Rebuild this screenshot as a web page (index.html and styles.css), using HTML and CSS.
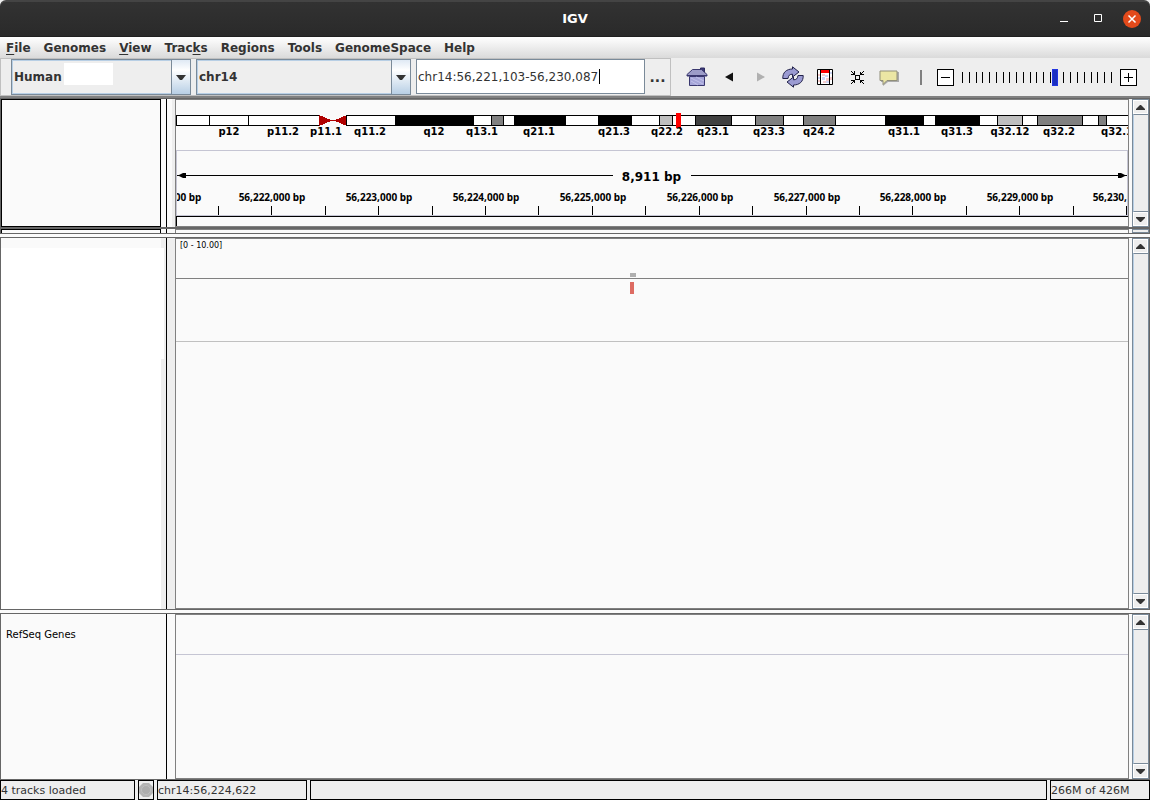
FILE: index.html
```html
<!DOCTYPE html>
<html lang="en">
<head>
<meta charset="utf-8">
<title>IGV</title>
<link rel="stylesheet" href="styles.css">
</head>
<body>
<header class="titlebar">
  <h1 class="title">IGV</h1>
  <div class="window-controls">
    <button class="win-btn" aria-label="Minimize"><svg width="18" height="18"><path d="M5 11.5h8" stroke="#fff"/></svg></button>
    <button class="win-btn" aria-label="Maximize"><svg width="18" height="18"><path d="M5.5 4.500h7v7h-7z" fill="none" stroke="#fff"/></svg></button>
    <button class="win-btn win-close" aria-label="Close"><svg width="18" height="18"><path d="M5.500 5.500l7 7m0-7l-7 7" stroke="#fff" stroke-width="1.500"/></svg></button>
  </div>
</header>
<nav class="menubar">
  <button class="menu"><u>F</u>ile</button>
  <button class="menu">Genomes</button>
  <button class="menu"><u>V</u>iew</button>
  <button class="menu">Trac<u>k</u>s</button>
  <button class="menu">Regions</button>
  <button class="menu">Tools</button>
  <button class="menu">GenomeSpace</button>
  <button class="menu">Help</button>
</nav>
<div class="toolbar">
  <div class="locus-group">
    <div class="combo combo-genome">
      <select class="combo-select" aria-label="Genome"><option>Human</option></select>
      <span class="blank-patch"></span>
      <span class="combo-arrow"><svg width="10" height="5"><path d="M0 0h10L6 5H4z" fill="#333"/></svg></span>
    </div>
    <div class="combo combo-chrom">
      <select class="combo-select" aria-label="Chromosome"><option>chr14</option></select>
      <span class="combo-arrow"><svg width="10" height="5"><path d="M0 0h10L6 5H4z" fill="#333"/></svg></span>
    </div>
    <div class="locus">
      <input class="locus-input" type="text" aria-label="Locus" value="chr14:56,221,103-56,230,087">
      <span class="caret"></span>
    </div>
    <button class="more" aria-label="More">...</button>
  </div>
  <div class="tools">
    <button class="tool" aria-label="Home"><svg width="22" height="20"><path d="M14.500 1h4v6h-4z" fill="#3c3a78" stroke="#2c2a60"/><path d="M6.500 2.500h9l5.500 5v1.500H1V7.500z" fill="#9c9cc8" stroke="#39376e"/><path d="M1 8.500h20" stroke="#39376e"/><path d="M3.500 9.500h15v9h-15z" fill="#a5a5d8" stroke="#39376e"/><path d="M5 11l12 6M5 14l7 4M10 10l8 4" stroke="#c2c2ea"/></svg></button>
    <button class="tool" aria-label="Back"><svg width="10" height="10"><path d="M1 5l8-4.500v9z" fill="#111"/></svg></button>
    <button class="tool" aria-label="Forward"><svg width="10" height="10"><path d="M9 5L1 .5v9z" fill="#b0b0b0"/></svg></button>
    <button class="tool" aria-label="Refresh"><svg width="22" height="22"><g fill="#9b9bd2" stroke="#22224a"><path d="M.8 12.500C.5 6.500 4.500 3 10.500 3V.8L17 6l-6.500 5V8.200C7.500 8.200 6.500 9.500 6 12.500z"/><path d="M21.200 9.500C21.500 15.500 17.500 19 11.500 19v2.200L5 16l6.500-5v2.800c3 0 4-1.300 4.500-4.300z"/></g></svg></button>
    <button class="tool" aria-label="Define a region of interest"><svg width="16" height="16"><path fill="#fff" stroke="#000" d="M.5.5h15v15H.5z"/><path fill="#f6cccc" d="M1 5h2v2H1zM1 11h2v2H1zM13 8h2v3h-2zM5 5h3v2H5zM9 9h3v3H9zM6 12h3v2H6z"/><path fill="#cfd6f4" d="M1 8h2v2H1zM13 3h2v2h-2zM8 6h3v2H8zM5 8h3v3H5zM9 12h3v2H9z"/><path fill="#f00" d="M4 1h8v3H4z"/><path d="M3.500 1v14M12.500 1v14" stroke="#000"/></svg></button>
    <button class="tool" aria-label="Resize tracks to fit"><svg class="crisp" width="13" height="13"><path fill="none" stroke="#000" d="M4.500 4.500h4v4h-4z"/><path d="M0 0h1v1H0zM1 1h1v1H1zM2 2h1v1H2zM3 0h1v4H0V3h3zM12 0h1v1h-1zM11 1h1v1h-1zM10 2h1v1h-1zM9 1h1v2h3v1H9zM0 12h1v1H0zM1 11h1v1H1zM2 10h1v1H2zM0 9h4v3H3v-2H0zM12 12h1v1h-1zM11 11h1v1h-1zM10 10h1v1h-1zM9 9h4v1h-3v2H9z"/></svg></button>
    <button class="tool" aria-label="Popup text behaviour"><svg width="20" height="18"><path d="M2 4h18v10H9l-5 4v-4H2z" fill="#aaa"/><path d="M1 3h17v9.500H8L4 16.500v-4H1z" fill="#ebe6a4" stroke="#918f78"/></svg></button>
  </div>
  <span class="separator"></span>
  <div class="zoom">
    <button class="zoom-btn" aria-label="Zoom out"><svg width="15" height="15"><path d="M3 7.500h9" stroke="#000"/></svg></button>
    <div class="zoom-scale">
      <div class="zoom-ticks"><i></i><i></i><i></i><i></i><i></i><i></i><i></i><i></i><i></i><i></i><i></i><i></i><i></i><i></i><i></i><i></i><i></i><i></i><i></i><i></i><i></i><i></i><i></i></div>
      <input class="zoom-range" type="range" min="0" max="100" value="62" aria-label="Zoom level">
    </div>
    <button class="zoom-btn" aria-label="Zoom in"><svg width="15" height="15"><path d="M3 7.500h9M7.500 3v9" stroke="#000"/></svg></button>
  </div>
</div>
<main class="workspace">
  <section class="panel header-panel">
    <div class="names"><div class="name-box"></div></div>
    <div class="gutter gutter-split"></div>
    <div class="view header-view">
      <svg class="ideogram crisp" width="100%" height="50">
        <rect x="0" y="15" width="100%" height="11" fill="#000"/>
        <rect x="1" y="16" width="100%" height="9" fill="#fff"/>
        <path d="M33.500 15v11M72.500 15v11M496.500 15v11" stroke="#000"/>
        <path d="M143 14h28v13h-28z" fill="#fafafa"/>
        <path d="M143 15l12 5h4l12-5v11l-12-5h-4l-12 5z" fill="#b00000"/>
        <path d="M170.500 15v11" stroke="#000"/>
        <path d="M219 15h79v11h-79zM338 15h52v11h-52zM422 15h34v11h-34zM709 15h39v11h-39zM759 15h45v11h-45z"/>
        <g stroke="#000">
          <path fill="#808080" d="M315.500 15.500h12v10h-12zM579.500 15.500h28v10h-28zM627.500 15.500h32v10h-32zM861.500 15.500h45v10h-45zM922.500 15.500h8v10h-8z"/>
          <path fill="#bfbfbf" d="M483.500 15.500h13v10h-13zM821.500 15.500h25v10h-25z"/>
          <path fill="#404040" d="M519.500 15.500h36v10h-36z"/>
        </g>
        <rect x="500" y="13" width="5" height="15" fill="#f00"/>
        <g class="band-label">
          <text x="53" y="35">p12</text><text x="107" y="35">p11.2</text><text x="150" y="35">p11.1</text><text x="194" y="35">q11.2</text><text x="258" y="35">q12</text><text x="306" y="35">q13.1</text><text x="363" y="35">q21.1</text><text x="438" y="35">q21.3</text><text x="491" y="35">q22.2</text><text x="537" y="35">q23.1</text><text x="593" y="35">q23.3</text><text x="643" y="35">q24.2</text><text x="728" y="35">q31.1</text><text x="781" y="35">q31.3</text><text x="834" y="35">q32.12</text><text x="883" y="35">q32.2</text><text x="941" y="35">q32.1</text>
        </g>
      </svg>
      <div class="ruler">
        <div class="span-row">
          <svg width="9" height="5"><path d="M0 2h2L6 0h3v5H6L2 3H0z"/></svg>
          <span class="span-line"></span>
          <span class="span-label">8,911 bp</span>
          <span class="span-line"></span>
          <svg width="9" height="5"><path d="M9 2H7L3 0H0v5h3l4-2h2z"/></svg>
        </div>
        <svg class="ruler-scale" width="100%" height="27">
          <path stroke="#000" d="M41.500 18v9M94.500 18v9M148.500 18v9M201.500 18v9M255.500 18v9M308.500 18v9M361.500 18v9M415.500 18v9M468.500 18v9M522.500 18v9M575.500 18v9M629.500 18v9M682.500 18v9M735.500 18v9M789.500 18v9M842.500 18v9M896.500 18v9M949.500 18v9"/>
          <g class="tick-label">
            <text x="-9" y="13">56,221,000 bp</text><text x="95" y="13">56,222,000 bp</text><text x="202" y="13">56,223,000 bp</text><text x="309" y="13">56,224,000 bp</text><text x="416" y="13">56,225,000 bp</text><text x="523" y="13">56,226,000 bp</text><text x="630" y="13">56,227,000 bp</text><text x="736" y="13">56,228,000 bp</text><text x="843" y="13">56,229,000 bp</text><text x="949" y="13">56,230,000 bp</text>
          </g>
        </svg>
      </div>
      <div class="roi-strip"></div>
    </div>
    <div class="scrollbar">
      <button class="scroll-btn" aria-label="Scroll up"><svg width="9" height="5"><path d="M4 0h1l4 4v1H0V4z" fill="#333"/></svg></button>
      <div class="scroll-track"></div>
      <button class="scroll-btn" aria-label="Scroll down"><svg width="9" height="5"><path d="M0 0h9v1L5 5H4L0 1z" fill="#333"/></svg></button>
    </div>
  </section>
  <section class="panel sliver-panel">
    <div class="names"><div class="name-box"></div></div>
    <div class="gutter"></div>
    <div class="view"></div>
    <div class="scrollbar"></div>
  </section>
  <div class="divider"></div>
  <section class="panel data-panel">
    <div class="names data-names"><div class="name-head"></div><div class="name-wide"></div><div class="name-rest"></div></div>
    <div class="gutter gutter-gray"></div>
    <div class="view">
      <div class="coverage">
        <span class="range-label">[0 - 10.00]</span>
        <svg class="crisp coverage-plot" width="100%" height="4"><rect x="454" width="6" height="4" fill="#afafaf"/></svg>
      </div>
      <div class="reads"><svg class="crisp" width="100%" height="12"><rect x="454" width="4" height="12" fill="#dd6b62"/></svg></div>
    </div>
    <div class="scrollbar">
      <button class="scroll-btn" aria-label="Scroll up"><svg width="9" height="5"><path d="M4 0h1l4 4v1H0V4z" fill="#333"/></svg></button>
      <div class="scroll-track"></div>
      <button class="scroll-btn" aria-label="Scroll down"><svg width="9" height="5"><path d="M0 0h9v1L5 5H4L0 1z" fill="#333"/></svg></button>
    </div>
  </section>
  <div class="divider"></div>
  <section class="panel feature-panel">
    <div class="names"><span class="track-name">RefSeq Genes</span></div>
    <div class="gutter"></div>
    <div class="view"><div class="feature-track"></div></div>
    <div class="scrollbar">
      <button class="scroll-btn" aria-label="Scroll up"><svg width="9" height="5"><path d="M4 0h1l4 4v1H0V4z" fill="#333"/></svg></button>
      <div class="scroll-track"></div>
      <button class="scroll-btn" aria-label="Scroll down"><svg width="9" height="5"><path d="M0 0h9v1L5 5H4L0 1z" fill="#333"/></svg></button>
    </div>
  </section>
</main>
<footer class="statusbar">
  <div class="status status-tracks">4 tracks loaded</div>
  <div class="status status-light"><svg width="14" height="16"><path d="M4 1h6l4 4v6l-4 4H4l-4-4V5z" fill="#b4b4b4"/><circle cx="7" cy="8" r="4.500" fill="#adadad" stroke="#bfbfbf"/></svg></div>
  <div class="status status-locus">chr14:56,224,622</div>
  <div class="status status-message"></div>
  <div class="status status-memory">266M of 426M</div>
</footer>
</body>
</html>
```

FILE: styles.css
```css
* { box-sizing: border-box; }

body {
  margin: 0;
  min-height: 100vh;
  display: flex;
  flex-direction: column;
  background: #eee;
  color: #333;
  font: 12px/16px "DejaVu Sans", Verdana, sans-serif;
}

button {
  margin: 0;
  padding: 0;
  border: 0;
  background: none;
  font: inherit;
  color: inherit;
}

svg { display: block; flex: none; }
.crisp { shape-rendering: crispEdges; }

/* Title bar and menus */
.titlebar {
  height: 37px;
  display: grid;
  grid-template-columns: 1fr auto 1fr;
  align-items: center;
  background: linear-gradient(#323232, #2a2a2a);
  border-top: 2px solid #444;
  border-bottom: 1px solid #202020;
  border-radius: 6px 6px 0 0;
}
.title {
  grid-column: 2;
  margin: 0;
  color: #fff;
  font-size: 13px;
  line-height: 16px;
}
.window-controls {
  display: flex;
  justify-content: flex-end;
  gap: 16px;
  padding-right: 9px;
}
.win-btn { width: 18px; height: 18px; border-radius: 9px; }
.win-close { background: #e34a1b; }

.menubar {
  height: 21px;
  display: flex;
  gap: 13px;
  padding-left: 6px;
  background: linear-gradient(#fff, #dadada);
}
.menu { font-weight: bold; line-height: 20px; }
.menu u { text-underline-offset: 2px; }

/* Toolbar */
.toolbar {
  height: 38px;
  display: flex;
  align-items: center;
}
.locus-group {
  width: 671px;
  height: 38px;
  display: flex;
  border: 1px solid #c0c0c0;
  padding-left: 10px;
}
.combo {
  position: relative;
  height: 36px;
  border: 1px solid #7a8a99;
  margin-right: 5px;
}
.combo-genome { width: 180px; }
.combo-chrom { width: 215px; }
.combo-select {
  appearance: none;
  width: 100%;
  height: 34px;
  padding: 0 20px 0 1px;
  border: 1px solid #b8cfe5;
  border-radius: 0;
  background: #eee;
  color: #333;
  font: bold 12px/16px "DejaVu Sans", Verdana, sans-serif;
}
.combo-arrow {
  position: absolute;
  top: 0;
  right: 0;
  bottom: 0;
  width: 19px;
  display: flex;
  align-items: center;
  justify-content: center;
  border-left: 1px solid #7a8a99;
  background: linear-gradient(#dfe9f4, #fff 30%, #b8cfe5);
  pointer-events: none;
}
.blank-patch {
  position: absolute;
  left: 52px;
  top: 3px;
  width: 49px;
  height: 22px;
  background: #fff;
}
.locus { position: relative; width: 229px; height: 35px; }
.locus-input {
  width: 100%;
  height: 35px;
  padding: 0 1px;
  border: 1px solid #7a8a99;
  background: #fff;
  color: #333;
  font: 12px/16px "DejaVu Sans", Verdana, sans-serif;
}
.caret {
  position: absolute;
  left: 183px;
  top: 10px;
  width: 1px;
  height: 15px;
  background: #000;
}
.more { flex: 1; font-size: 14px; font-weight: bold; line-height: 36px; }
.tools { display: flex; padding-left: 10px; }
.tool {
  width: 32px;
  height: 32px;
  display: flex;
  align-items: center;
  justify-content: center;
}
.separator { width: 2px; height: 15px; margin: 0 15px; background: #808080; }
.zoom { display: flex; align-items: center; gap: 5px; }
.zoom-btn { width: 17px; height: 17px; border: 1px solid #000; background: #fff; }
.zoom-scale { position: relative; width: 156px; height: 17px; }
.zoom-ticks {
  display: flex;
  justify-content: space-between;
  height: 17px;
  padding: 3px;
}
.zoom-ticks i { width: 1px; background: #000; }
.zoom-range {
  appearance: none;
  position: absolute;
  inset: 0;
  width: 100%;
  height: 17px;
  margin: 0;
  background: none;
}
.zoom-range::-webkit-slider-thumb {
  appearance: none;
  width: 6px;
  height: 17px;
  border: 1px solid #2236e0;
  background: #1a2fc0;
}

/* Panels */
.workspace {
  flex: 1;
  display: flex;
  flex-direction: column;
  border-top: 2px solid #808080;
  border-bottom: 1px solid #666;
  background: #fafafa;
}
.panel {
  display: flex;
  border: solid #666;
  border-width: 0 1px;
}
.header-panel { height: 129px; border-top-width: 1px; }
.sliver-panel { height: 6px; border-top-width: 2px; overflow: hidden; }
.data-panel { flex: 1; }
.feature-panel { height: 165px; }
.divider {
  height: 5px;
  border: solid #666;
  border-width: 1px 0;
}
.names { width: 166px; border-right: 1px solid #000; }
.name-box { width: 160px; height: 100%; border: 1px solid #000; }
.sliver-panel .name-box { border-bottom: 0; }
.data-names { display: flex; flex-direction: column; background: #eee; }
.name-head { width: 160px; height: 10px; background: #fafafa; }
.name-wide { width: 163px; height: 111px; background: #fff; }
.name-rest { width: 160px; flex: 1; background: #fff; }
.gutter { width: 8px; }
.gutter-split { border-right: 3px solid #eee; }
.gutter-gray { background: #eee; }
.track-name {
  display: block;
  padding: 14px 5px;
  color: #000;
  font-size: 10px;
  line-height: 14px;
}
.view {
  flex: 1;
  min-width: 0;
  overflow: hidden;
  border: 1px solid #808080;
}
.sliver-panel .view { border-bottom: 0; }
.header-view { display: flex; flex-direction: column; color: #000; }
.band-label { font-size: 10px; font-weight: bold; text-anchor: middle; }
.ruler { height: 66px; border: 1px solid #c5c5d3; }
.span-row {
  height: 37px;
  display: flex;
  align-items: center;
  padding-top: 12px;
}
.span-line { flex: 1; height: 1px; background: #000; }
.span-label {
  padding: 2px 10px 0 9px;
  font-size: 12px;
  line-height: 16px;
  font-weight: bold;
}
.tick-label {
  font: bold 10px/12px "Noto Sans", "Open Sans", sans-serif;
  text-anchor: middle;
}
.roi-strip { flex: 1; border: solid #000; border-width: 1px 0 0 1px; }

.coverage {
  height: 40px;
  display: flex;
  flex-direction: column;
  border-bottom: 1px solid #808080;
}
.range-label {
  padding-left: 4px;
  color: #000;
  font-size: 8px;
  line-height: 14px;
}
.coverage-plot { margin-top: auto; margin-bottom: 1px; }
.reads { height: 63px; padding-top: 3px; border-bottom: 1px solid #c0c0c0; }
.feature-track { height: 40px; border-bottom: 1px solid #c5c5d3; }

.scrollbar {
  width: 17px;
  margin-left: 3px;
  display: flex;
  flex-direction: column;
  border: 1px solid #7a8a99;
  background: #eee;
}
.scroll-btn {
  height: 14px;
  display: flex;
  align-items: center;
  justify-content: center;
  border: 1px solid #fff;
}
.scroll-track {
  flex: 1;
  border: 1px solid #7a8a99;
  border-right: 0;
  border-left: 1px solid #b8cfe5;
}

/* Status bar */
.statusbar { display: flex; gap: 3px; height: 20px; }
.status {
  border: 1px solid #000;
  font-size: 11px;
  line-height: 19px;
  white-space: nowrap;
}
.status-tracks { width: 135px; }
.status-light { width: 16px; padding-top: 1px; }
.status-locus { width: 150px; }
.status-message { flex: 1; }
.status-memory { width: 100px; }
```
